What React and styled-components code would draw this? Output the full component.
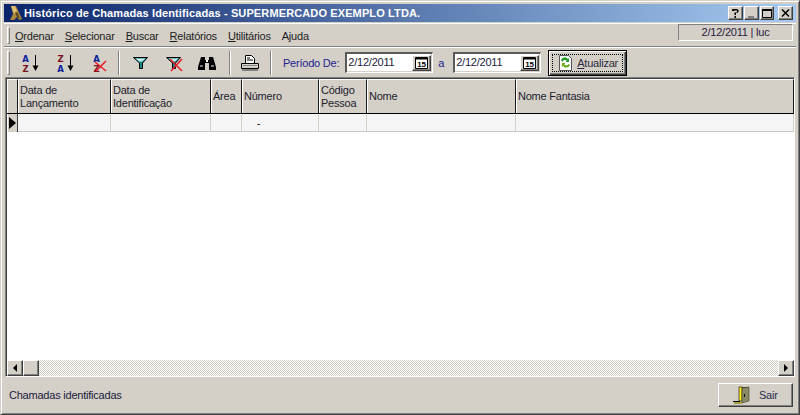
import React from 'react'
import styled, { createGlobalStyle } from 'styled-components'

const Global = createGlobalStyle`
    html, body { margin: 0; padding: 0; background: #d4d0c8; }
    * { box-sizing: border-box; }
`;

const raised = `
    border-top: 1px solid #fff;
    border-left: 1px solid #fff;
    border-right: 1px solid #404040;
    border-bottom: 1px solid #404040;
    box-shadow: inset -1px -1px 0 #808080;
`;

const Window = styled.div`
    width: 800px;
    height: 415px;
    display: flex;
    flex-direction: column;
    background: #d4d0c8;
    border-top: 1px solid #d4d0c8;
    border-left: 1px solid #d4d0c8;
    border-right: 1px solid #404040;
    border-bottom: 1px solid #404040;
    box-shadow: inset 1px 1px 0 #fff, inset -1px -1px 0 #808080;
    padding: 3px;
    font-family: "Liberation Sans", Tahoma, sans-serif;
    font-size: 11px;
    letter-spacing: -0.22px;
    color: #000;
    overflow: hidden;
`;

const TitleBar = styled.div`
    height: 18px;
    flex: none;
    display: flex;
    align-items: center;
    padding: 0 3px 0 4px;
    background: linear-gradient(90deg, #0a246a, #a6caf0);
`;

const Title = styled.div`
    flex: 1;
    color: #fff;
    font-weight: bold;
    font-size: 11px;
    letter-spacing: 0.12px;
    white-space: nowrap;
`;

const CaptionButton = styled.div`
    width: ${p => p.$w || 15}px;
    height: 14px;
    margin-left: ${p => p.$gap || 0}px;
    background: #d4d0c8;
    ${raised}
    display: flex;
    align-items: center;
    justify-content: center;
`;

const MenuBand = styled.div`
    height: 24px;
    margin-top: 1px;
    flex: none;
    display: flex;
    align-items: center;
    padding: 1px 3px 0 3px;
    border-top: 1px solid #fff;
    border-bottom: 1px solid #808080;
`;

const Grip = styled.div`
    width: 3px;
    height: ${p => p.$h}px;
    flex: none;
    border-top: 1px solid #fff;
    border-left: 1px solid #fff;
    border-right: 1px solid #808080;
    border-bottom: 1px solid #808080;
`;

const MenuList = styled.div`
    flex: 1;
    display: flex;
    margin-left: 5px;
`;

const MenuItem = styled.span`
    margin-right: ${p => p.$gap}px;
    color: #1c1c1c;
    white-space: nowrap;
    u { text-underline-offset: 1px; }
`;

const StatusPanel = styled.div`
    width: 115px;
    height: 17px;
    margin-top: -6px;
    border-top: 1px solid #808080;
    border-left: 1px solid #808080;
    border-right: 1px solid #fff;
    border-bottom: 1px solid #fff;
    text-align: center;
    line-height: 15px;
    color: #2a1a40;
    flex: none;
`;

const ToolBand = styled.div`
    height: 30px;
    flex: none;
    display: flex;
    align-items: center;
    padding-left: 3px;
    border-top: 1px solid #fff;
`;

const ToolIcon = styled.div`
    width: ${p => p.$w}px;
    height: 20px;
    flex: none;
    margin-left: ${p => p.$ml || 0}px;
    display: flex;
    justify-content: center;
    align-items: center;
`;

const Divider = styled.div`
    width: 2px;
    height: 24px;
    flex: none;
    margin: ${p => p.$m};
    border-left: 1px solid #808080;
    border-right: 1px solid #fff;
`;

const Label = styled.span`
    color: #23238e;
    white-space: nowrap;
    margin: ${p => p.$m};
`;

const DateField = styled.div`
    width: 88px;
    height: 21px;
    flex: none;
    display: flex;
    background: #fff;
    border-top: 2px solid #5a5a5a;
    border-left: 2px solid #5a5a5a;
    border-right: 1px solid #fff;
    border-bottom: 1px solid #fff;
    box-shadow: inset -1px -1px 0 #d4d0c8;
    padding-left: 1px;
`;

const DateText = styled.div`
    flex: 1;
    line-height: 17px;
    color: #1a1a3c;
`;

const DatePicker = styled.div`
    width: 19px;
    height: 16px;
    margin: 1px 1px 0 0;
    background: #d4d0c8;
    ${raised}
    display: flex;
    align-items: center;
    justify-content: center;
`;

const Refresh = styled.button`
    width: 79px;
    height: 26px;
    flex: none;
    margin-left: 7px;
    padding: 0;
    background: #d4d0c8;
    border: 1px solid #000;
    box-shadow: inset 1px 1px 0 #fff, inset -1px -1px 0 #404040, inset -2px -2px 0 #808080;
    display: flex;
    align-items: center;
    justify-content: center;
    font: inherit;
    letter-spacing: inherit;
    color: #2a2a3c;
`;

const FocusRing = styled.div`
    width: 71px;
    height: 18px;
    border: 1px dotted #000;
    display: flex;
    align-items: center;
    padding-left: 5px;
    gap: 3px;
`;

const Grid = styled.div`
    flex: 1;
    min-height: 0;
    margin: 0 0 0 1px;
    width: 790px;
    display: flex;
    flex-direction: column;
    background: #fff;
    border-top: 1px solid #808080;
    border-left: 1px solid #808080;
    border-right: 1px solid #fff;
    border-bottom: 1px solid #fff;
    box-shadow: inset 1px 1px 0 #404040;
    padding: 1px 0 0 1px;
`;

const columns = '11px 93px 100px 31px 77px 48px 149px 1fr';

const HeaderRow = styled.div`
    display: grid;
    grid-template-columns: ${columns};
    height: 35px;
    flex: none;
    border-bottom: 1px solid #000;
`;

const HeaderCell = styled.div`
    background: #d4d0c8;
    border-top: 1px solid #fff;
    border-left: 1px solid #fff;
    border-right: 1px solid #1a1a1a;
    display: flex;
    align-items: center;
    padding-left: 1px;
    line-height: 13px;
    color: #1c1c2c;
    white-space: pre-line;
`;

const DataRow = styled.div`
    display: grid;
    grid-template-columns: ${columns};
    height: 18px;
    flex: none;
    background: #f5f5f5;
    border-bottom: 1px solid #c8c8c8;
`;

const RowMarker = styled.div`
    background: #d4d0c8;
    border-left: 1px solid #fff;
    border-right: 1px solid #404040;
    border-bottom: 1px solid #404040;
    display: flex;
    align-items: center;
    justify-content: center;
`;

const DataCell = styled.div`
    border-right: 1px solid #d4d0c8;
    padding-left: ${p => p.$indent || 0}px;
    line-height: 19px;
    font-size: 10px;
`;

const Blank = styled.div`
    flex: 1;
    background: #fff;
`;

const ScrollBar = styled.div`
    height: 16px;
    flex: none;
    display: flex;
    background-color: #eceae6;
    background-image: repeating-conic-gradient(#d4d0c8 0 25%, #fff 0 50%);
    background-size: 2px 2px;
`;

const ScrollButton = styled.div`
    width: ${p => p.$w}px;
    height: 16px;
    flex: none;
    background: #d4d0c8;
    ${raised}
    display: flex;
    align-items: center;
    justify-content: center;
`;

const Spacer = styled.div`
    flex: 1;
`;

const Footer = styled.div`
    height: 34px;
    flex: none;
    display: flex;
    align-items: center;
    justify-content: space-between;
    padding: 2px 3px 0 5px;
`;

const FooterText = styled.span`
    color: #1a1a3c;
`;

const ExitButton = styled.button`
    width: 75px;
    height: 24px;
    padding: 0 0 0 14px;
    background: #d4d0c8;
    ${raised}
    display: flex;
    align-items: center;
    gap: 8px;
    font: inherit;
    letter-spacing: inherit;
    color: #2a2a4c;
`;

const Arrow = ({ dir, big }) => (
    <svg width={big ? 9 : 8} height={big ? 14 : 10} viewBox={big ? '0 0 9 14' : '0 0 8 10'}>
        {big
            ? <path d="M1 1v12l7-6z" fill="#000" />
            : <path d={dir === 'left' ? 'M6 1v8L2 5z' : 'M2 1v8l4-4z'} fill="#000" />}
    </svg>
)

const AppIcon = () => (
    <svg width="16" height="16" viewBox="0 0 16 16">
        <path d="M3 1h5l6 13-3 1-2-3-3 3H2l3-6z" fill="#a8863c" />
        <path d="M3 1h4l2 5-3 3z" fill="#e0c070" />
        <path d="M7 7l3 1 2 6-3-2z" fill="#5a4620" />
    </svg>
)

const Letter = ({ y, color, children, x = 5.5 }) => (
    <text x={x} y={y} textAnchor="middle" fontFamily="DejaVu Sans" fontWeight="bold" fontSize="8.5" letterSpacing="0" fill={color}>{children}</text>
)

const SortIcon = ({ top, bottom, topColor, bottomColor }) => (
    <svg width="24" height="20" viewBox="0 0 24 20">
        <Letter y={8.5} color={topColor}>{top}</Letter>
        <Letter y={18.5} color={bottomColor}>{bottom}</Letter>
        <path d="M15.5 2v11" stroke="#000" strokeWidth="1" />
        <path d="M12.5 12.5h6L15.5 18z" fill="#000" />
    </svg>
)

const ClearSortIcon = () => (
    <svg width="20" height="20" viewBox="0 0 20 20">
        <Letter x={6.5} y={8.5} color="#0a1e9a">A</Letter>
        <Letter x={6.5} y={18.5} color="#7a1020">Z</Letter>
        <path d="M5 9l11 9M16 8L6 18" stroke="#e8202a" strokeWidth="1.6" />
    </svg>
)

const FunnelIcon = ({ crossed }) => (
    <svg width="20" height="20" viewBox="0 0 20 20">
        <path d="M1.500 4.500h14L10.500 10v5.500h-3V10z" fill="#128a8a" stroke="#000" strokeWidth="1" />
        <path d="M3.500 5.500h10L10 8.500H7z" fill="#c8eeee" />
        {crossed && <path d="M5 6l12 12M17 6L6 18" stroke="#e8202a" strokeWidth="1.6" />}
    </svg>
)

const BinocularsIcon = () => (
    <svg width="18" height="16" viewBox="0 0 18 16">
        <path d="M3 2h4v3h4V2h4l3 10v3h-7V8H7v7H0v-3z" fill="#000" />
        <path d="M2 10h3v2H2zM13 10h3v2h-3z" fill="#777" />
        <path d="M8 5h2v2H8z" fill="#fff" />
    </svg>
)

const PrinterIcon = () => (
    <svg width="18" height="18" viewBox="0 0 18 18">
        <path d="M4.500 1.500h6l3 3v5h-9z" fill="#fff" stroke="#000" />
        <path d="M6 4h3M6 6h6" stroke="#000" />
        <path d="M.5 9.500h17v5H.5z" fill="#d4d0c8" stroke="#000" />
        <path d="M2 11h14v1H2z" fill="#888" />
        <path d="M1 15h16v2H1z" fill="#808080" />
    </svg>
)

const CalendarIcon = () => (
    <svg width="13" height="12" viewBox="0 0 13 12">
        <path d="M.5.5h12v11H.5z" fill="#fff" stroke="#000" />
        <path d="M1 1h11v1.500H1z" fill="#000" />
        <text x="6.500" y="10.200" textAnchor="middle" fontFamily="Liberation Sans" fontWeight="bold" fontSize="8" fill="#000">15</text>
    </svg>
)

const RefreshIcon = () => (
    <svg width="16" height="18" viewBox="0 0 16 18">
        <path d="M1.500 1.500h9l3 3v12h-12z" fill="#fff" stroke="#555" />
        <path d="M3 6a4 4 0 0 1 7-1l1-1v4H7.500l1.300-1.200A2.500 2.500 0 0 0 4.500 8z" fill="#2a9a2a" />
        <path d="M12 11a4 4 0 0 1-7 1l-1 1V9h3.500l-1.300 1.200a2.500 2.500 0 0 0 4.300-.2z" fill="#6ab020" />
    </svg>
)

const DoorIcon = () => (
    <svg width="18" height="18" viewBox="0 0 18 18">
        <path d="M6 1h10v14H6z" fill="#4a4a30" />
        <path d="M6 1h3v14H6z" fill="#ffee20" stroke="#000" strokeWidth=".6" />
        <path d="M9 2l7-1v14l-7 2z" fill="#8a8a68" stroke="#3c3c28" strokeWidth=".6" />
        <path d="M11 8h1v3h-1z" fill="#000" />
        <path d="M0 15.500h7" stroke="#000" />
        <path d="M1 16h8v2H1z" fill="#a8a040" />
    </svg>
)

const headers = [
    'Data de\nLançamento',
    'Data de\nIdentificação',
    'Área',
    'Número',
    'Código\nPessoa',
    'Nome',
    'Nome Fantasia',
]

function App() {
    return (
        <Window>
            <Global />
            <TitleBar>
                <AppIcon />
                <Title>Histórico de Chamadas Identificadas - SUPERMERCADO EXEMPLO LTDA.</Title>
                <CaptionButton>
                    <svg width="9" height="10" viewBox="0 0 9 10">
                        <path d="M1 3V1.500L2 1h4l1.500 1v2L6 5H5v2H3.500V4.500H5.500L6 4V2.500H3V3zM3.500 8H5v2H3.500z" fill="#000" />
                    </svg>
                </CaptionButton>
                <CaptionButton $gap={1}>
                    <svg width="9" height="9" viewBox="0 0 9 9"><path d="M1 7h6v2H1z" fill="#808080" /></svg>
                </CaptionButton>
                <CaptionButton $gap={1} $w={14}>
                    <svg width="10" height="9" viewBox="0 0 10 9"><path d="M.5 1.500h9v7h-9z" fill="none" stroke="#000" /><path d="M0 0h10v2H0z" fill="#000" /></svg>
                </CaptionButton>
                <CaptionButton $gap={4}>
                    <svg width="9" height="8" viewBox="0 0 9 8"><path d="M1 .5l7 7M8 .5l-7 7" stroke="#000" strokeWidth="1.500" fill="none" /></svg>
                </CaptionButton>
            </TitleBar>
            <MenuBand>
                <Grip $h={17} />
                <MenuList>
                    <MenuItem $gap={11}><u>O</u>rdenar</MenuItem>
                    <MenuItem $gap={11}><u>S</u>elecionar</MenuItem>
                    <MenuItem $gap={11}><u>B</u>uscar</MenuItem>
                    <MenuItem $gap={11}><u>R</u>elatórios</MenuItem>
                    <MenuItem $gap={11}><u>U</u>tilitários</MenuItem>
                    <MenuItem $gap={0}>A<u>j</u>uda</MenuItem>
                </MenuList>
                <StatusPanel>2/12/2011 | luc</StatusPanel>
            </MenuBand>
            <ToolBand>
                <Grip $h={24} />
                <ToolIcon $w={35} $ml={4}>
                    <SortIcon top="A" bottom="Z" topColor="#0a1e9a" bottomColor="#7a1020" />
                </ToolIcon>
                <ToolIcon $w={35}>
                    <SortIcon top="Z" bottom="A" topColor="#7a1020" bottomColor="#0a1e9a" />
                </ToolIcon>
                <ToolIcon $w={31}><ClearSortIcon /></ToolIcon>
                <Divider $m="0 5px 0 3px" />
                <ToolIcon $w={33}><FunnelIcon /></ToolIcon>
                <ToolIcon $w={34}><FunnelIcon crossed /></ToolIcon>
                <ToolIcon $w={30}><BinocularsIcon /></ToolIcon>
                <Divider $m="0 2px 0 7px" />
                <ToolIcon $w={34}><PrinterIcon /></ToolIcon>
                <Divider $m="0 11px 0 3px" />
                <Label $m="0 6px 0 0">Período De:</Label>
                <DateField>
                    <DateText>2/12/2011</DateText>
                    <DatePicker><CalendarIcon /></DatePicker>
                </DateField>
                <Label $m="0 9px 0 5px">a</Label>
                <DateField>
                    <DateText>2/12/2011</DateText>
                    <DatePicker><CalendarIcon /></DatePicker>
                </DateField>
                <Refresh>
                    <FocusRing>
                        <RefreshIcon />
                        <span><u>A</u>tualizar</span>
                    </FocusRing>
                </Refresh>
            </ToolBand>
            <Grid>
                <HeaderRow>
                    <HeaderCell />
                    {headers.map(h => <HeaderCell key={h}>{h}</HeaderCell>)}
                </HeaderRow>
                <DataRow>
                    <RowMarker><Arrow big /></RowMarker>
                    <DataCell />
                    <DataCell />
                    <DataCell />
                    <DataCell $indent={15}>-</DataCell>
                    <DataCell />
                    <DataCell />
                    <DataCell />
                </DataRow>
                <Blank />
                <ScrollBar>
                    <ScrollButton $w={16}><Arrow dir="left" /></ScrollButton>
                    <ScrollButton $w={16} />
                    <Spacer />
                    <ScrollButton $w={16}><Arrow dir="right" /></ScrollButton>
                </ScrollBar>
            </Grid>
            <Footer>
                <FooterText>Chamadas identificadas</FooterText>
                <ExitButton>
                    <DoorIcon />
                    <span>Sair</span>
                </ExitButton>
            </Footer>
        </Window>
    )
}

export default App
